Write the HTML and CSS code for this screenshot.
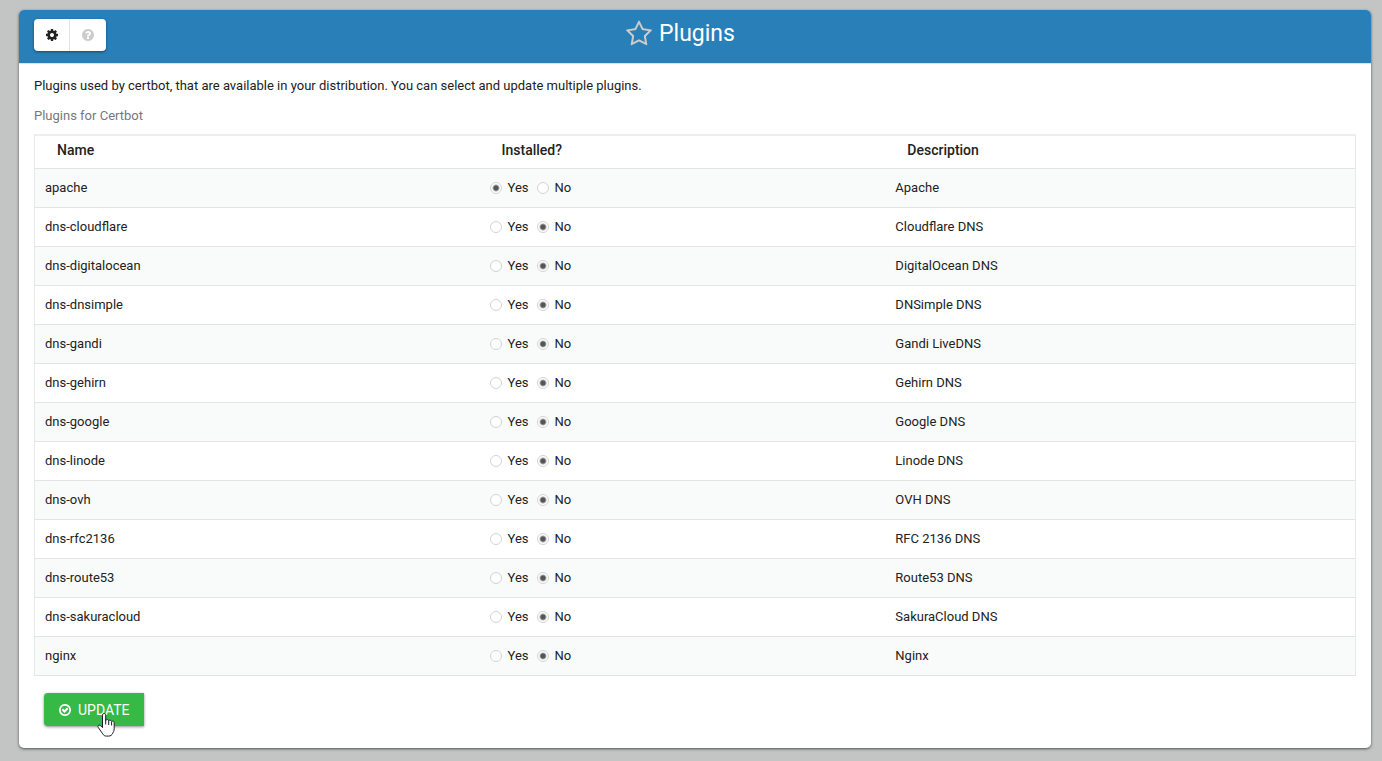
FILE: index.html
```html
<!DOCTYPE html>
<html lang="en">
<head>
<meta charset="utf-8">
<title>Plugins</title>
<link rel="stylesheet" href="styles.css">
</head>
<body>
<main class="panel">
  <header class="panel-head">
    <div class="tools">
      <button class="tool" type="button" aria-label="Module configuration"><svg class="icon" viewBox="0 0 1792 1792"><path d="M1152 896q0-106-75-181t-181-75-181 75-75 181 75 181 181 75 181-75 75-181zm512-109v222q0 12-8 23t-20 13l-185 28q-19 54-39 91 35 50 107 138 10 12 10 25t-9 23q-27 37-99 108t-94 71q-12 0-26-9l-138-108q-44 23-91 38-16 136-29 186-7 28-36 28h-222q-14 0-24.5-8.5t-11.5-21.5l-28-184q-49-16-90-37l-141 107q-10 9-25 9-14 0-25-11-126-114-165-168-7-10-7-23 0-12 8-23 15-21 51-66.5t54-70.5q-27-50-41-99l-183-27q-13-2-21-12.5t-8-23.5v-222q0-12 8-23t19-13l186-28q14-46 39-92-40-57-107-138-10-12-10-24 0-10 9-23 26-36 98.5-107.5t94.5-71.5q13 0 26 10l138 107q44-23 91-38 16-136 29-186 7-28 36-28h222q14 0 24.5 8.5t11.5 21.5l28 184q49 16 90 37l142-107q9-9 24-9 13 0 25 10 129 119 165 170 7 8 7 22 0 12-8 23-15 21-51 66.5t-54 70.5q26 50 41 98l183 28q13 2 21 12.5t8 23.5z"/></svg></button>
      <button class="tool tool-muted" type="button" aria-label="Help"><svg class="icon" viewBox="0 0 1792 1792"><path d="M1024 1376v-192q0-14-9-23t-23-9h-192q-14 0-23 9t-9 23v192q0 14 9 23t23 9h192q14 0 23-9t9-23zm256-672q0-88-55.5-163t-138.5-116-170-41q-243 0-371 213-15 24 8 42l132 100q7 6 19 6 16 0 25-12 53-68 86-92 34-24 86-24 48 0 85.5 26t37.5 59q0 38-20 61t-68 45q-63 28-115.5 86.5t-52.5 125.5v36q0 14 9 23t23 9h192q14 0 23-9t9-23q0-19 21.5-49.5t54.5-49.5q32-18 49-28.5t46-35 44.5-48 28-60.5 12.5-81zm384 192q0 209-103 385.5t-279.5 279.5-385.5 103-385.5-103-279.5-279.5-103-385.5 103-385.5 279.5-279.5 385.5-103 385.5 103 279.5 279.5 103 385.5z"/></svg></button>
    </div>
    <h1 class="title"><svg class="star" viewBox="0 0 1792 1792"><path d="M1201 1004l306-297-422-62-189-382-189 382-422 62 306 297-73 421 378-199 377 199zm527-357q0 22-26 48l-363 354 86 500q1 7 1 20 0 50-41 50-19 0-40-12l-449-236-449 236q-22 12-40 12-21 0-31.5-14.5t-10.5-35.5q0-6 2-20l86-500-364-354q-25-27-25-48 0-37 56-46l502-73 225-455q19-41 49-41t49 41l225 455 502 73q56 9 56 46z"/></svg>Plugins</h1>
  </header>
  <form class="panel-body">
    <p class="intro">Plugins used by certbot, that are available in your distribution. You can select and update multiple plugins.</p>
    <table class="plugins">
      <caption>Plugins for Certbot</caption>
      <colgroup><col class="col-name"><col class="col-installed"><col></colgroup>
      <thead><tr><th>Name</th><th>Installed?</th><th>Description</th></tr></thead>
      <tbody>
        <tr><td>apache</td><td><div class="choice"><label><input type="radio" name="apache" checked>Yes</label><label><input type="radio" name="apache">No</label></div></td><td>Apache</td></tr>
        <tr><td>dns-cloudflare</td><td><div class="choice"><label><input type="radio" name="cloudflare">Yes</label><label><input type="radio" name="cloudflare" checked>No</label></div></td><td>Cloudflare DNS</td></tr>
        <tr><td>dns-digitalocean</td><td><div class="choice"><label><input type="radio" name="digitalocean">Yes</label><label><input type="radio" name="digitalocean" checked>No</label></div></td><td>DigitalOcean DNS</td></tr>
        <tr><td>dns-dnsimple</td><td><div class="choice"><label><input type="radio" name="dnsimple">Yes</label><label><input type="radio" name="dnsimple" checked>No</label></div></td><td>DNSimple DNS</td></tr>
        <tr><td>dns-gandi</td><td><div class="choice"><label><input type="radio" name="gandi">Yes</label><label><input type="radio" name="gandi" checked>No</label></div></td><td>Gandi LiveDNS</td></tr>
        <tr><td>dns-gehirn</td><td><div class="choice"><label><input type="radio" name="gehirn">Yes</label><label><input type="radio" name="gehirn" checked>No</label></div></td><td>Gehirn DNS</td></tr>
        <tr><td>dns-google</td><td><div class="choice"><label><input type="radio" name="google">Yes</label><label><input type="radio" name="google" checked>No</label></div></td><td>Google DNS</td></tr>
        <tr><td>dns-linode</td><td><div class="choice"><label><input type="radio" name="linode">Yes</label><label><input type="radio" name="linode" checked>No</label></div></td><td>Linode DNS</td></tr>
        <tr><td>dns-ovh</td><td><div class="choice"><label><input type="radio" name="ovh">Yes</label><label><input type="radio" name="ovh" checked>No</label></div></td><td>OVH DNS</td></tr>
        <tr><td>dns-rfc2136</td><td><div class="choice"><label><input type="radio" name="rfc2136">Yes</label><label><input type="radio" name="rfc2136" checked>No</label></div></td><td>RFC 2136 DNS</td></tr>
        <tr><td>dns-route53</td><td><div class="choice"><label><input type="radio" name="route53">Yes</label><label><input type="radio" name="route53" checked>No</label></div></td><td>Route53 DNS</td></tr>
        <tr><td>dns-sakuracloud</td><td><div class="choice"><label><input type="radio" name="sakuracloud">Yes</label><label><input type="radio" name="sakuracloud" checked>No</label></div></td><td>SakuraCloud DNS</td></tr>
        <tr><td>nginx</td><td><div class="choice"><label><input type="radio" name="nginx">Yes</label><label><input type="radio" name="nginx" checked>No</label></div></td><td>Nginx</td></tr>
      </tbody>
    </table>
    <div class="actions">
      <button class="update" type="button"><svg class="icon" viewBox="0 0 1792 1792"><path d="M1299 813l-422 422q-19 19-45 19t-45-19l-294-294q-19-19-19-45t19-45l102-102q19-19 45-19t45 19l147 147 275-275q19-19 45-19t45 19l102 102q19 19 19 45t-19 45zm141 83q0-148-73-273t-198-198-273-73-273 73-198 198-73 273 73 273 198 198 273 73 273-73 198-198 73-273zm224 0q0 209-103 385.5t-279.5 279.5-385.5 103-385.5-103-279.5-279.5-103-385.5 103-385.5 279.5-279.5 385.5-103 385.5 103 279.5 279.5 103 385.5z"/></svg>UPDATE</button>
      <svg class="pointer" viewBox="0 0 18 24"><path d="M5.500 2.200c0-2.200 3.200-2.200 3.200 0v5.300c.6-1.400 2.800-1.200 3 .3.600-1 2.700-.8 2.900.7.800-.8 2.600-.4 2.600 1.200v6.200c0 2-.8 3-1.500 4.300-.6 1.800-2.200 2.900-4.200 2.900h-2c-1.800 0-3-.8-3.800-2.300l-4.400-6.300c-1.200-1.800.8-3.100 2.300-1.800l1.900 1.900z"/><path d="M8.700 7v4.500M11.700 8v4M14.600 9v3.500"/></svg>
    </div>
  </form>
</main>
</body>
</html>
```
FILE: styles.css
```css
* { box-sizing: border-box; }
body {
  margin: 0;
  padding: 10px 11px 12px 19px;
  background: #c3c5c4;
  color: #222;
  font: 13px/18px Roboto, sans-serif;
}
.panel {
  background: #fff;
  border-radius: 5px;
  box-shadow: 0 1px 3px rgba(0, 0, 0, .6);
}
.panel-head {
  display: grid;
  grid-template-columns: 1fr auto 1fr;
  align-items: center;
  height: 53px;
  padding: 0 45px 0 15px;
  background: #2980b9;
  border-radius: 5px 5px 0 0;
  box-shadow: 0 1px 0 #dce3e8;
}
.tools {
  display: flex;
  justify-self: start;
  margin-top: -3px;
  background: #fff;
  border-radius: 4px;
  box-shadow: 0 1px 3px rgba(0, 0, 0, .45);
}
.tool {
  display: grid;
  place-items: center;
  width: 36px;
  height: 32px;
  padding: 0;
  border: 0;
  background: none;
  color: #222;
}
.tool-muted { box-shadow: -1px 0 0 #e4e4e4; color: #ccc; }
.icon { width: 14px; height: 14px; fill: currentColor; }
.title {
  display: flex;
  align-items: center;
  gap: 6px;
  margin: 0 0 6px;
  color: #fff;
  font-size: 23px;
  line-height: 32px;
  font-weight: 400;
}
.star { width: 28px; height: 28px; fill: #ccc; }
.panel-body { padding: 14px 15px 22px; }
.intro { margin: 0 0 12px; }
.plugins {
  width: 100%;
  table-layout: fixed;
  border-collapse: separate;
  border-spacing: 0;
}
.plugins caption { padding-bottom: 9px; color: #777; text-align: left; }
.col-name { width: 33.7%; }
.col-installed { width: 30.7%; }
.plugins th {
  height: 35px;
  padding: 0 22px 4px;
  border-top: 2px solid #eee;
  border-bottom: 1px solid #e2e4e4;
  font-size: 14px;
  font-weight: 500;
  text-align: left;
}
.plugins td {
  height: 39px;
  padding: 0 10px;
  border-bottom: 1px solid #e2e4e4;
}
.plugins tr > :first-child { border-left: 1px solid #e8eaea; }
.plugins tr > :last-child { border-right: 1px solid #e8eaea; }
.plugins tbody tr:nth-child(odd) { background: #f9fbfa; }
.choice { display: flex; gap: 8px; }
.choice label { display: flex; align-items: center; gap: 6px; }
.choice input {
  appearance: none;
  width: 12px;
  height: 12px;
  margin: 0;
  border: 1px solid #d3d3d3;
  border-radius: 50%;
  background: #fff;
}
.choice input:checked { background: radial-gradient(circle, #555 0 2px, #fff 4px); }
.actions { position: relative; padding: 17px 10px 0; }
.update {
  display: flex;
  align-items: center;
  gap: 6px;
  height: 33px;
  padding: 0 14px;
  border: 0;
  border-radius: 4px 0 0 4px;
  background: #37b945;
  box-shadow: 0 1px 3px rgba(0, 0, 0, .45);
  color: #fff;
  font: 14px/20px Roboto, sans-serif;
}
.pointer {
  position: absolute;
  left: 63px;
  top: 37px;
  width: 18px;
  height: 24px;
  fill: #fff;
  stroke: #1c1c2b;
  stroke-linejoin: round;
}
```
